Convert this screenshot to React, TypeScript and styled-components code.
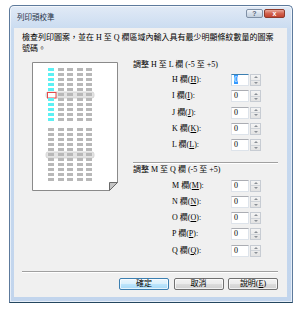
import React from 'react'
import styled, { createGlobalStyle } from 'styled-components'

const GlobalStyle = createGlobalStyle`
  body {
    margin: 0;
    background: #fff;
    font-family: 'Liberation Serif', 'Noto Sans CJK TC', serif;
    color: #000;
  }
`

const Window = styled.div`
  box-sizing: border-box;
  width: 284px;
  height: 298px;
  margin: 5px 0 0 9px;
  border: 1px solid #5d7a9c;
  border-bottom-color: #24475f;
  border-radius: 5px 5px 0 0;
  padding: 0 5px 5px 4px;
  display: flex;
  flex-direction: column;
  background: linear-gradient(#e1eaf6, #c9dbf0 24px, #c2d5ed);
  box-shadow: inset 0 0 0 1px rgba(255, 255, 255, 0.6);
`

const TitleBar = styled.div`
  height: 22px;
  display: flex;
  align-items: flex-start;
  justify-content: space-between;
  padding: 0 2px 0 3px;
`

const Caption = styled.span`
  margin-top: 6px;
  font-size: 7.5px;
  line-height: 11px;
  color: #1e2f45;
`

const CaptionButtons = styled.div`
  display: flex;
  gap: 1px;
  margin-top: 3px;
`

const CaptionButton = styled.div<{ $close?: boolean }>`
  box-sizing: border-box;
  width: ${(p) => (p.$close ? 21 : 17)}px;
  height: 9px;
  border: 1px solid ${(p) => (p.$close ? '#8e3b2c' : '#7f90a6')};
  border-radius: 2px;
  background: ${(p) =>
    p.$close
      ? 'linear-gradient(#eaa99c, #d2634f 50%, #c34330)'
      : 'linear-gradient(#f0f4f9, #d5dfeb 50%, #c3cfdd)'};
  display: flex;
  align-items: center;
  justify-content: center;
  font-family: 'Liberation Sans', sans-serif;
  font-weight: bold;
  font-size: 7px;
  line-height: 7px;
  color: ${(p) => (p.$close ? '#fff' : '#5a6678')};
`

const Client = styled.div`
  flex: 1;
  display: flex;
  flex-direction: column;
  background: #f0f0f0;
  padding-bottom: 7px;
`

const Intro = styled.p`
  margin: 0;
  padding: 3.5px 0 0 8px;
  font-size: 8px;
  line-height: 11px;
`

const Body = styled.div`
  display: flex;
  align-items: flex-start;
  margin-top: 5px;
`

const PreviewBox = styled.div`
  width: 86px;
  height: 129px;
  margin: 3.5px 0 0 18px;
`

const Settings = styled.div`
  width: 145px;
  margin-left: 15px;
  display: flex;
  flex-direction: column;
`

const Group = styled.div`
  display: flex;
  flex-direction: column;
`

const GroupHeading = styled.div`
  font-size: 8px;
  line-height: 11px;
  white-space: nowrap;
`

const RowList = styled.div`
  display: flex;
  flex-direction: column;
  gap: 4.25px;
  margin-top: 4.5px;
`

const FieldRow = styled.div`
  display: flex;
  align-items: center;
  height: 12px;
  padding-left: 39px;
`

const FieldLabel = styled.span`
  width: 59px;
  font-size: 8px;
  line-height: 12px;
  white-space: nowrap;
`

const SpinInput = styled.div<{ $focused?: boolean }>`
  box-sizing: border-box;
  width: 18px;
  height: 12px;
  border: 1px solid #dde3ea;
  border-top-color: ${(p) => (p.$focused ? '#3c7fb1' : '#abadb3')};
  border-left-color: ${(p) => (p.$focused ? '#b6d3ea' : '#e2e3ea')};
  background: #fff;
  padding-left: 2px;
  font-size: 8px;
  line-height: 10px;
`

const Selected = styled.span`
  background: #3399ff;
  color: #fff;
`

const SpinButtons = styled.div`
  box-sizing: border-box;
  width: 11px;
  height: 12px;
  margin-left: 1px;
  display: flex;
  flex-direction: column;
  border: 1px solid #c7ccd3;
  background: linear-gradient(#f4f4f4, #e3e3e3);
`

const SpinHalf = styled.div<{ $down?: boolean }>`
  flex: 1;
  display: flex;
  align-items: center;
  justify-content: center;
  border-top: ${(p) => (p.$down ? '1px solid #d0d4d9' : 'none')};

  &::after {
    content: '';
    border-left: 2px solid transparent;
    border-right: 2px solid transparent;
    ${(p) =>
      p.$down ? 'border-top: 2px solid #8a8f96;' : 'border-bottom: 2px solid #8a8f96;'}
  }
`

const Etched = styled.div<{ $top?: number }>`
  height: 0;
  margin-top: ${(p) => p.$top ?? 0}px;
  border-top: 1px solid #a0a0a0;
  border-bottom: 1px solid #fff;
`

const Footer = styled.div`
  margin: auto 9px 0 8px;
  display: flex;
  flex-direction: column;
`

const ButtonRow = styled.div`
  display: flex;
  justify-content: flex-end;
  gap: 4.5px;
  margin-top: 4.5px;
`

const Button = styled.div<{ $default?: boolean }>`
  box-sizing: border-box;
  width: 50px;
  height: 12.5px;
  border: 1px solid ${(p) => (p.$default ? '#3c7fb1' : '#707070')};
  border-radius: 2px;
  background: ${(p) =>
    p.$default
      ? 'linear-gradient(#eaf6fd, #d9f0fc 50%, #bee6fd 50%, #a7d9f5)'
      : 'linear-gradient(#f2f2f2, #ebebeb 50%, #dddddd 50%, #cfcfcf)'};
  box-shadow: inset 0 0 0 1px rgba(255, 255, 255, 0.7);
  display: flex;
  align-items: center;
  justify-content: center;
  font-size: 8px;
  line-height: 10px;
`

const columns = [16, 26, 35, 45, 54]
const rows = Array.from({ length: 11 }, (_, i) => i)

const PatternGroup: React.FC<{ top: number; cyan?: boolean }> = ({ top, cyan }) => (
  <g>
    <rect x={14} y={top + 24} width={48} height={6} rx={2} fill="#e4e4e4" stroke="#d0d0d0" strokeWidth={0.8} />
    {rows.map((r) =>
      columns.map((c, ci) => {
        const isCyan = cyan && ci === 0
        if (isCyan && r === 5) {
          return (
            <rect key={`${r}-${c}`} x={15.5} y={top + 24.5} width={8.5} height={5.5} fill="#fff" stroke="#e44a4a" strokeWidth={1} />
          )
        }
        return (
          <rect
            key={`${r}-${c}`}
            x={c}
            y={top + r * 5}
            width={6}
            height={3}
            fill={isCyan ? '#5cf0f4' : '#b8b8b8'}
          />
        )
      })
    )}
  </g>
)

const Preview: React.FC = () => (
  <PreviewBox>
    <svg width={86} height={129} viewBox="0 0 86 129">
      <path d="M0.5 0.5 H85.5 V120.5 L77.5 128.5 H0.5 Z" fill="#fff" stroke="#8a8a8a" />
      <path d="M85.5 120.5 H77.5 V128.5 Z" fill="#c4c4c4" stroke="#6a6a6a" strokeLinejoin="round" />
      <PatternGroup top={6} cyan />
      <PatternGroup top={66} />
    </svg>
  </PreviewBox>
)

const groups = [
  { heading: '調整 H 至 L 欄 (-5 至 +5)', keys: ['H', 'I', 'J', 'K', 'L'] },
  { heading: '調整 M 至 Q 欄 (-5 至 +5)', keys: ['M', 'N', 'O', 'P', 'Q'] },
]

const App: React.FC = () => {
  return (
    <>
      <GlobalStyle />
      <Window>
        <TitleBar>
          <Caption>列印頭校準</Caption>
          <CaptionButtons>
            <CaptionButton>?</CaptionButton>
            <CaptionButton $close>x</CaptionButton>
          </CaptionButtons>
        </TitleBar>

        <Client>
          <Intro>
            檢查列印圖案，並在 H 至 Q 欄區域內輸入具有最少明顯條紋數量的圖案
            <br />
            號碼。
          </Intro>

          <Body>
            <Preview />

            <Settings>
              {groups.map((g, gi) => (
                <React.Fragment key={g.heading}>
                  {gi > 0 && <Etched $top={11} />}
                  <Group>
                    <GroupHeading>{g.heading}</GroupHeading>
                    <RowList>
                      {g.keys.map((k) => (
                        <FieldRow key={k}>
                          <FieldLabel>
                            {k} 欄(<u>{k}</u>):
                          </FieldLabel>
                          <SpinInput $focused={k === 'H'}>
                            {k === 'H' ? <Selected>0</Selected> : '0'}
                          </SpinInput>
                          <SpinButtons>
                            <SpinHalf />
                            <SpinHalf $down />
                          </SpinButtons>
                        </FieldRow>
                      ))}
                    </RowList>
                  </Group>
                </React.Fragment>
              ))}
            </Settings>
          </Body>

          <Footer>
            <Etched />
            <ButtonRow>
              <Button $default>確定</Button>
              <Button>取消</Button>
              <Button>
                說明(<u>E</u>)
              </Button>
            </ButtonRow>
          </Footer>
        </Client>
      </Window>
    </>
  )
}

export default App
